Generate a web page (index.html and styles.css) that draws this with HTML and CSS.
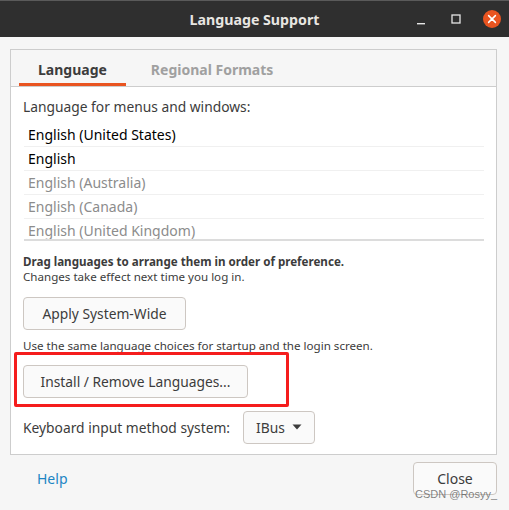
FILE: index.html
```html
<!DOCTYPE html>
<html>
<head>
<meta charset="utf-8">
<link rel="stylesheet" href="styles.css">
</head>
<body>
<div class="window">
  <header class="titlebar">
    <div class="tb-side"></div>
    <div class="tb-title">Language Support</div>
    <div class="tb-controls">
      <span class="ctl ctl-min"><svg width="10" height="10" viewBox="0 0 10 10"><rect x="1" y="7" width="8" height="1.4" fill="#e6e6e6"/></svg></span>
      <span class="ctl ctl-max"><svg width="10" height="10" viewBox="0 0 10 10"><rect x="1" y="1" width="8" height="8" fill="none" stroke="#e6e6e6" stroke-width="1.3"/></svg></span>
      <span class="ctl ctl-close"><svg width="18" height="18" viewBox="0 0 18 18"><circle cx="9" cy="9" r="9" fill="#e95420"/><path d="M5.6 5.6 L12.4 12.4 M12.4 5.6 L5.6 12.4" stroke="#fff" stroke-width="1.5" stroke-linecap="round"/></svg></span>
    </div>
  </header>
  <main class="body">
    <section class="notebook">
      <nav class="tabs">
        <div class="tab tab-active">Language</div>
        <div class="tab">Regional Formats</div>
      </nav>
      <div class="page">
        <div class="label">Language for menus and windows:</div>
        <div class="list">
          <div class="row row-on">English (United States)</div>
          <div class="row row-on">English</div>
          <div class="row">English (Australia)</div>
          <div class="row">English (Canada)</div>
          <div class="row">English (United Kingdom)</div>
        </div>
        <div class="hint">
          <div class="hint-bold">Drag languages to arrange them in order of preference.</div>
          <div>Changes take effect next time you log in.</div>
        </div>
        <div class="btn btn-apply">Apply System-Wide</div>
        <div class="note">Use the same language choices for startup and the login screen.</div>
        <div class="btn btn-install">Install / Remove Languages...</div>
        <div class="kbd-row">
          <span class="label">Keyboard input method system:</span>
          <span class="combo">IBus <svg width="10" height="6" viewBox="0 0 10 6"><path d="M0.5 0.5 L9.5 0.5 L5 5.5 Z" fill="#3c3c3c"/></svg></span>
        </div>
      </div>
    </section>
    <footer class="actions">
      <span class="help">Help</span>
      <div class="btn btn-close">Close</div>
    </footer>
  </main>
  <div class="highlight"></div>
  <div class="watermark">CSDN @Rosyy_</div>
</div>
</body>
</html>
```
FILE: styles.css
```css
* { box-sizing: border-box; }
html, body { margin: 0; padding: 0; }
body {
  width: 509px;
  height: 510px;
  overflow: hidden;
  background: #f6f6f6;
  font-family: "Noto Sans", "DejaVu Sans", sans-serif;
  color: #3c3c3c;
}
.window {
  position: relative;
  width: 509px;
  height: 510px;
  display: flex;
  flex-direction: column;
}
.titlebar {
  height: 37px;
  background: #2f2f2f;
  border-top: 1px solid #5a5a5a;
  display: grid;
  grid-template-columns: 1fr auto 1fr;
  align-items: center;
  color: #e8e6e2;
}
.tb-title {
  font-weight: 700;
  font-size: 14.2px;
  padding-top: 1px;
}
.tb-controls {
  display: flex;
  justify-content: flex-end;
  align-items: center;
  padding-right: 8px;
}
.ctl { display: flex; align-items: center; justify-content: center; }
.ctl-min { width: 10px; margin-right: 25px; margin-top: 4px; }
.ctl-max { width: 10px; margin-right: 22px; }
.ctl-close { width: 18px; }

.body {
  flex: 1;
  display: flex;
  flex-direction: column;
  padding: 12px 12px 0 10px;
}
.notebook {
  height: 406px;
  border: 1px solid #cdcdcd;
  background: #ffffff;
  display: flex;
  flex-direction: column;
}
.tabs {
  height: 37px;
  background: #f6f6f6;
  border-bottom: 1px solid #cdcdcd;
  display: flex;
  padding-left: 8px;
}
.tab {
  height: 36px;
  display: flex;
  align-items: center;
  padding: 2px 19px 0 19px;
  font-weight: 700;
  font-size: 14px;
  color: #a0a0a0;
  margin-right: 6px;
}
.tab-active {
  color: #3c3c3c;
  border-bottom: 3px solid #e95420;
  padding-top: 5px;
}
.page {
  padding: 10px 12px 0 12px;
  display: flex;
  flex-direction: column;
  align-items: flex-start;
  font-size: 13.8px;
  white-space: nowrap;
}
.label { line-height: 20px; }
.list {
  margin-top: 6px;
  margin-left: 1px;
  width: 460px;
  height: 118px;
  overflow: hidden;
  border-bottom: 2px solid #dcdcdc;
}
.row {
  height: 24px;
  line-height: 24px;
  padding-left: 4px;
  border-bottom: 1px solid #f0f0f0;
  color: #8c8c8c;
  font-size: 14px;
}
.row-on { color: #000000; }
.hint {
  margin-top: 13px;
  font-size: 11.6px;
  line-height: 15px;
}
.hint-bold { font-weight: 700; }
.btn {
  flex: 0 0 auto;
  display: flex;
  align-items: center;
  justify-content: center;
  font-size: 13.8px;
  color: #3c3c3c;
  background: #fafafa;
  border: 1px solid #cdc7c2;
  border-radius: 4px;
  height: 33px;
  padding: 0 0 1px 0;
  white-space: nowrap;
}
.btn-apply { margin-top: 13px; width: 163px; }
.note {
  margin-top: 8px;
  font-size: 11.6px;
  line-height: 15px;
}
.btn-install { margin-top: 12px; width: 225px; }
.kbd-row {
  margin-top: 13px;
  display: flex;
  align-items: center;
  gap: 13px;
}
.combo {
  height: 33px;
  width: 72px;
  border: 1px solid #cdc7c2;
  border-radius: 4px;
  background: #fafafa;
  display: flex;
  align-items: center;
  justify-content: space-between;
  padding: 0 12px 1px 12px;
}
.actions {
  height: 52px;
  display: flex;
  align-items: flex-start;
  justify-content: space-between;
  padding-left: 27px;
}
.help {
  color: #1c85c4;
  font-size: 14px;
  line-height: 20px;
  margin-top: 14px;
}
.btn-close { width: 84px; height: 33px; margin-top: 7px; font-size: 14px; }
.highlight {
  position: absolute;
  left: 14px;
  top: 352px;
  width: 275px;
  height: 55px;
  border: 3px solid #f51d1d;
  border-radius: 2px;
  pointer-events: none;
}
.watermark {
  position: absolute;
  left: 415px;
  top: 488px;
  font-family: "Liberation Sans", sans-serif;
  font-size: 11px;
  color: rgba(90, 90, 90, 0.75);
}
```
